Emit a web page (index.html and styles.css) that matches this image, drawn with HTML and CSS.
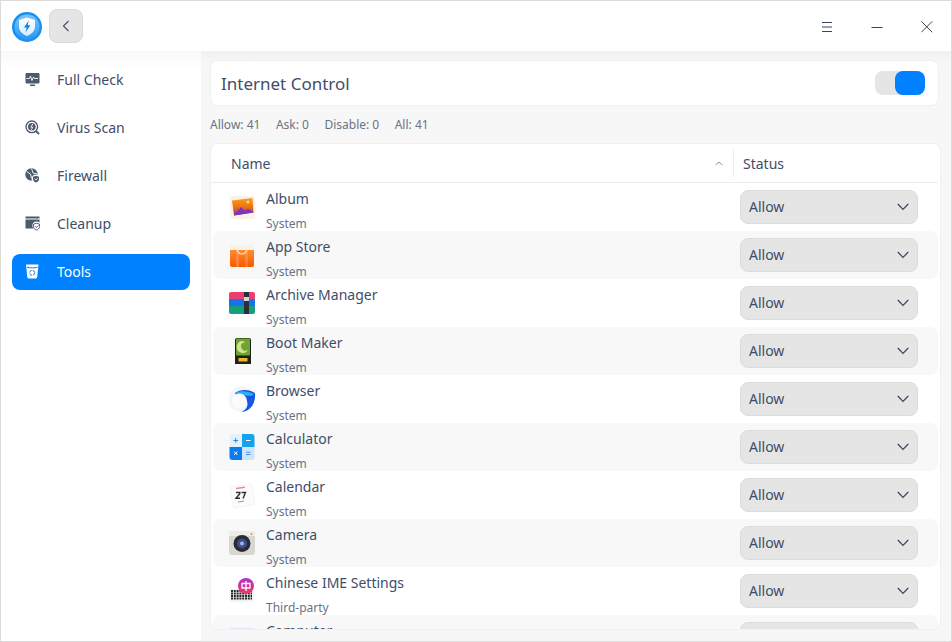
FILE: index.html
```html
<!DOCTYPE html>
<html lang="en">
<head>
    <meta charset="UTF-8">
    <title>Internet Control</title>
    <link rel="stylesheet" href="styles.css">
</head>
<body>
    <div class="window">
        <header class="titlebar">
            <svg class="logo" width="32" height="32" viewBox="0 0 32 32">
                <defs>
                    <linearGradient id="logoFill" x1="0" y1="0" x2="0" y2="1"><stop offset="0" stop-color="#7cc6fa"/><stop offset="1" stop-color="#2a97f2"/></linearGradient>
                    <linearGradient id="shieldFill" x1="0" y1="0" x2="0" y2="1"><stop offset="0" stop-color="#fff"/><stop offset="1" stop-color="#d5ecfd"/></linearGradient>
                </defs>
                <circle cx="16" cy="16" r="15" fill="#1a8ff2"/>
                <circle cx="16" cy="16" r="12.500" fill="url(#logoFill)"/>
                <path d="M16 6.500l8 2.500v6.500c0 4.500-3.200 7.500-8 9.500-4.800-2-8-5-8-9.500V9z" fill="url(#shieldFill)"/>
                <path d="M17.800 9.500l-4.800 7h2.700l-1.300 5 5-7.200h-2.800z" fill="#0f7fe8"/>
            </svg>
            <button class="back-btn">
                <svg width="10" height="12" viewBox="0 0 10 12"><path d="M7.500 1L2.500 6l5 5" fill="none" stroke="#4a5468" stroke-width="1.200"/></svg>
            </button>
            <div class="win-controls">
                <svg width="12" height="12" viewBox="0 0 12 12"><path d="M1 2.500h10M1 7h10M1 11.500h10" stroke="#3b4558" stroke-width="1"/></svg>
                <svg width="12" height="12" viewBox="0 0 12 12"><path d="M0.500 7.500h11" stroke="#3b4558" stroke-width="1"/></svg>
                <svg width="12" height="13" viewBox="0 0 12 13"><path d="M0.300 1.300l11 11M11.300 1.300l-11 11" stroke="#3b4558" stroke-width="1" fill="none"/></svg>
            </div>
        </header>

        <div class="content">
            <nav class="sidebar">
                <a class="nav-item">
                    <svg class="nav-icon" viewBox="0 0 15 15"><path d="M1.500 1h12a1 1 0 0 1 1 1v8.500a1 1 0 0 1-1 1h-12a1 1 0 0 1-1-1V2a1 1 0 0 1 1-1zM5 12.500h5V14H5z" fill="#4f5a70"/><path d="M1.500 6.500h3l1-2.500 1.500 4.500 1.500-3.500 1 1.500h3.500" fill="none" stroke="#fff" stroke-width=".9"/></svg>
                    Full Check
                </a>
                <a class="nav-item">
                    <svg class="nav-icon" viewBox="0 0 15 15"><circle cx="6.800" cy="6.800" r="5.800" fill="none" stroke="#4f5a70" stroke-width="1.400"/><circle cx="6.800" cy="6.800" r="3.800" fill="#4f5a70"/><path d="M7.800 4L5.800 7.200h2L6.300 9.800" fill="none" stroke="#fff" stroke-width=".9"/><path d="M11 11l3 3" stroke="#4f5a70" stroke-width="2"/></svg>
                    Virus Scan
                </a>
                <a class="nav-item">
                    <svg class="nav-icon" viewBox="0 0 15 15"><circle cx="6.500" cy="6.500" r="6.200" fill="#4f5a70"/><path d="M1.500 3.500L5.500 6l1 4M6.500 .5l1.500 4.500 4.500 1" fill="none" stroke="#fff" stroke-width=".9"/><circle cx="11" cy="11" r="4.500" fill="#fff"/><path d="M8 8.700l3-1 3 1V11c0 1.800-1.300 3-3 3.500-1.700-.5-3-1.700-3-3.500z" fill="#4f5a70"/><path d="M9.500 10.800l1.300 1.300 1.800-2" fill="none" stroke="#fff" stroke-width=".9"/></svg>
                    Firewall
                </a>
                <a class="nav-item">
                    <svg class="nav-icon" viewBox="0 0 15 15"><path d="M0.500 .5h14v2H.5zM.5 3.500h14v3.200a4 4 0 0 0-6 5.800H.5z" fill="#4f5a70"/><path d="M8.500 8.200l3-1 3 1v2.300c0 1.800-1.300 3-3 3.500-1.700-.5-3-1.700-3-3.500z" fill="none" stroke="#4f5a70"/><path d="M10 10.300l1.300 1.300 1.800-2" fill="none" stroke="#4f5a70"/></svg>
                    Cleanup
                </a>
                <a class="nav-item active">
                    <svg class="nav-icon" viewBox="0 0 15 15"><path d="M1 .5h12.500l-1.300 12.800a1.500 1.500 0 0 1-1.500 1.200H3.800a1.500 1.500 0 0 1-1.500-1.200z" fill="#fff"/><path d="M2 3.200c3 .8 8 .8 10.500 0" fill="none" stroke="#0081ff"/><circle cx="7.200" cy="8.800" r="2.500" fill="none" stroke="#0081ff" stroke-dasharray="3 1"/></svg>
                    Tools
                </a>
            </nav>

            <main class="main">
                <section class="control-card">
                    <span class="control-title">Internet Control</span>
                    <div class="switch"><span class="switch-knob"></span></div>
                </section>

                <div class="stats">
                    <span>Allow: 41</span>
                    <span>Ask: 0</span>
                    <span>Disable: 0</span>
                    <span>All: 41</span>
                </div>

                <section class="table">
                    <div class="table-head">
                        <div class="col-name">
                            Name
                            <svg width="8" height="5" viewBox="0 0 8 5"><path d="M0.500 4L4 1l3.500 3" fill="none" stroke="#8a919e"/></svg>
                        </div>
                        <div class="col-status">Status</div>
                    </div>
                    <div class="rows">
                        <div class="row">
                            <svg class="app-icon" viewBox="0 0 28 28">
                                <defs><linearGradient id="album" x1="0" y1="0" x2="0" y2="1"><stop offset="0" stop-color="#f9a11b"/><stop offset=".55" stop-color="#ec6d12"/><stop offset="1" stop-color="#6a2fc0"/></linearGradient></defs>
                                <rect x="2" y="2" width="25" height="23" rx="3" fill="#fbf1ea"/>
                                <path d="M4 6.500l20.500-2.500 1 14.500L6 21.500z" fill="url(#album)"/>
                                <path d="M6 21.500l7-8.500 4 4 3-2 5.500 3.500z" fill="#7a35b8"/>
                                <circle cx="20" cy="8" r="1.500" fill="#ffd98a"/>
                            </svg>
                            <div class="app-text"><div class="app-name">Album</div><div class="app-type">System</div></div>
                            <div class="select">Allow<svg width="12" height="8" viewBox="0 0 12 8"><path d="M0.800 1L6 6.500 11.200 1" fill="none" stroke="#3b4558" stroke-width="1.200"/></svg></div>
                        </div>
                        <div class="row">
                            <svg class="app-icon" viewBox="0 0 28 28">
                                <defs><linearGradient id="store" x1="0" y1="0" x2="0" y2="1"><stop offset="0" stop-color="#ff8f33"/><stop offset="1" stop-color="#f95800"/></linearGradient></defs>
                                <path d="M2 7h24v16a2 2 0 0 1-2 2H4a2 2 0 0 1-2-2z" fill="url(#store)"/>
                                <path d="M2 3h24v5H2z" fill="#fdf0e4"/>
                                <path d="M8 8h3v17H8zM17 8h3v17h-3z" fill="#ffa468" opacity=".45"/>
                                <path d="M9 7a5 5 0 0 0 10 0" fill="none" stroke="#ffe2c9" stroke-width="1.200"/>
                            </svg>
                            <div class="app-text"><div class="app-name">App Store</div><div class="app-type">System</div></div>
                            <div class="select">Allow<svg width="12" height="8" viewBox="0 0 12 8"><path d="M0.800 1L6 6.500 11.200 1" fill="none" stroke="#3b4558" stroke-width="1.200"/></svg></div>
                        </div>
                        <div class="row">
                            <svg class="app-icon" viewBox="0 0 28 28">
                                <rect x="1" y="2" width="26" height="8" rx="2" fill="#ea3f6f"/>
                                <rect x="1" y="9" width="26" height="8" fill="#1673ea"/>
                                <rect x="1" y="16" width="26" height="8" rx="2" fill="#16a07a"/>
                                <rect x="16" y="2" width="5" height="22" fill="#2c2f3a"/>
                                <rect x="16" y="7" width="5" height="4" fill="#d8d8d8"/>
                            </svg>
                            <div class="app-text"><div class="app-name">Archive Manager</div><div class="app-type">System</div></div>
                            <div class="select">Allow<svg width="12" height="8" viewBox="0 0 12 8"><path d="M0.800 1L6 6.500 11.200 1" fill="none" stroke="#3b4558" stroke-width="1.200"/></svg></div>
                        </div>
                        <div class="row">
                            <svg class="app-icon" viewBox="0 0 28 28">
                                <path d="M7 2a2 2 0 0 1 2-2h12a2 2 0 0 1 2 2v24H7z" fill="#1d2116"/>
                                <rect x="8" y="0.500" width="14" height="17" rx="1" fill="#6fa52c"/>
                                <path d="M15 3a6 6 0 1 0 5 9 4.500 4.500 0 0 1-7-3 3.500 3.500 0 0 1 5-4z" fill="#cfe29a"/>
                                <path d="M10.500 20h9v3.500h-9z" fill="#e8b92e"/>
                            </svg>
                            <div class="app-text"><div class="app-name">Boot Maker</div><div class="app-type">System</div></div>
                            <div class="select">Allow<svg width="12" height="8" viewBox="0 0 12 8"><path d="M0.800 1L6 6.500 11.200 1" fill="none" stroke="#3b4558" stroke-width="1.200"/></svg></div>
                        </div>
                        <div class="row">
                            <svg class="app-icon" viewBox="0 0 28 28">
                                <circle cx="13.500" cy="13" r="13" fill="#f3f5f8"/>
                                <path d="M7 7c5-4 14-4 20 0 1 9-4 19-14 19 8-2 9-13 1-15-2-.5-5 0-7-4z" fill="#1557e6"/>
                                <path d="M7 7c5-3 13-2 19 1-1 2-5 2-8 1.500-3-.5-8 0-11-2.500z" fill="#2ab0f6"/>
                                <circle cx="11.500" cy="15" r="7.500" fill="#fbfbfd"/>
                            </svg>
                            <div class="app-text"><div class="app-name">Browser</div><div class="app-type">System</div></div>
                            <div class="select">Allow<svg width="12" height="8" viewBox="0 0 12 8"><path d="M0.800 1L6 6.500 11.200 1" fill="none" stroke="#3b4558" stroke-width="1.200"/></svg></div>
                        </div>
                        <div class="row">
                            <svg class="app-icon" viewBox="0 0 28 28">
                                <defs><clipPath id="calcClip"><rect x="1.500" y="0" width="25" height="26" rx="3"/></clipPath></defs>
                                <g clip-path="url(#calcClip)">
                                    <rect x="1" y="0" width="13" height="13" fill="#e4f1fd"/>
                                    <rect x="14" y="0" width="13" height="13" fill="#17a2ee"/>
                                    <rect x="1" y="13" width="13" height="13" fill="#0b7bf2"/>
                                    <rect x="14" y="13" width="13" height="13" fill="#cfe4fb"/>
                                </g>
                                <path d="M5.500 6.500H10M7.700 4.200v4.500" stroke="#1a8df0"/>
                                <path d="M18 6.500h4.500M6 17.500l3.500 3.500M9.500 17.500L6 21" stroke="#fff"/>
                                <path d="M18 18.200h4.500M18 20.500h4.500" stroke="#3f94f0"/>
                            </svg>
                            <div class="app-text"><div class="app-name">Calculator</div><div class="app-type">System</div></div>
                            <div class="select">Allow<svg width="12" height="8" viewBox="0 0 12 8"><path d="M0.800 1L6 6.500 11.200 1" fill="none" stroke="#3b4558" stroke-width="1.200"/></svg></div>
                        </div>
                        <div class="row">
                            <svg class="app-icon" viewBox="0 0 28 28">
                                <path d="M3 5l19-3a2 2 0 0 1 2 2l3 18-20 4a2 2 0 0 1-2-1.500L2 7z" fill="#fbfbfb" stroke="#ececec" stroke-width=".6"/>
                                <path d="M8 6.500l9-1.300" stroke="#e88a90" stroke-width="1.500"/>
                                <path d="M10 20l6-1" stroke="#9a9a9a"/>
                                <path d="M8 10.500h3.800v1.200l-3.800 4.500h4M13.500 10.500h4l-2.500 6" fill="none" stroke="#2d2f36" stroke-width="1.400"/>
                            </svg>
                            <div class="app-text"><div class="app-name">Calendar</div><div class="app-type">System</div></div>
                            <div class="select">Allow<svg width="12" height="8" viewBox="0 0 12 8"><path d="M0.800 1L6 6.500 11.200 1" fill="none" stroke="#3b4558" stroke-width="1.200"/></svg></div>
                        </div>
                        <div class="row">
                            <svg class="app-icon" viewBox="0 0 28 28">
                                <rect x="1" y="1" width="26" height="24" rx="3" fill="#d9d7d2"/>
                                <path d="M1 6V4a3 3 0 0 1 3-3h20a3 3 0 0 1 3 3v2z" fill="#eeede9"/>
                                <circle cx="14" cy="13.500" r="8.500" fill="#2a2c35"/>
                                <circle cx="14" cy="13.500" r="5" fill="#3c4e8c"/>
                                <circle cx="14" cy="13.500" r="2" fill="#9fb2e8"/>
                                <circle cx="23.500" cy="4" r=".8" fill="#e64c3c"/>
                            </svg>
                            <div class="app-text"><div class="app-name">Camera</div><div class="app-type">System</div></div>
                            <div class="select">Allow<svg width="12" height="8" viewBox="0 0 12 8"><path d="M0.800 1L6 6.500 11.200 1" fill="none" stroke="#3b4558" stroke-width="1.200"/></svg></div>
                        </div>
                        <div class="row">
                            <svg class="app-icon" viewBox="0 0 28 28">
                                <rect x="1" y="11" width="25" height="13" rx="2" fill="#f4f3f5"/>
                                <path d="M3 13h21M3 15.500h21M3 18h21M3 20.500h21" stroke="#26262b" stroke-width="1.800" stroke-dasharray="2 .8"/>
                                <defs><linearGradient id="ime" x1="0" y1="0" x2="0" y2="1"><stop offset="0" stop-color="#b02fd6"/><stop offset="1" stop-color="#f5365c"/></linearGradient></defs>
                                <circle cx="18" cy="8" r="8" fill="url(#ime)"/>
                                <path d="M14 5.500h8V10h-8zM18 3v10" fill="none" stroke="#fff" stroke-width="1.300"/>
                            </svg>
                            <div class="app-text"><div class="app-name">Chinese IME Settings</div><div class="app-type">Third-party</div></div>
                            <div class="select">Allow<svg width="12" height="8" viewBox="0 0 12 8"><path d="M0.800 1L6 6.500 11.200 1" fill="none" stroke="#3b4558" stroke-width="1.200"/></svg></div>
                        </div>
                        <div class="row">
                            <svg class="app-icon" viewBox="0 0 28 28"><rect x="1" y="2" width="25" height="20" rx="2" fill="#dfe6fb"/></svg>
                            <div class="app-text"><div class="app-name">Computer</div><div class="app-type">System</div></div>
                            <div class="select">Allow<svg width="12" height="8" viewBox="0 0 12 8"><path d="M0.800 1L6 6.500 11.200 1" fill="none" stroke="#3b4558" stroke-width="1.200"/></svg></div>
                        </div>
                    </div>
                </section>
            </main>
        </div>
    </div>
</body>
</html>
```

FILE: styles.css
```css
* {
    box-sizing: border-box;
}

html, body {
    margin: 0;
    height: 100%;
    overflow: hidden;
}

body {
    font-family: "Noto Sans", sans-serif;
    font-size: 14px;
    color: #414d68;
}

.window {
    width: 952px;
    height: 642px;
    display: flex;
    flex-direction: column;
    border: 1px solid #dcdcdc;
    background: #f7f7f7;
}

.titlebar {
    height: 50px;
    flex: none;
    display: flex;
    align-items: center;
    padding-left: 10px;
    background: #fff;
}

.logo {
    margin-top: 2px;
    margin-right: 6px;
}

.back-btn {
    width: 34px;
    height: 34px;
    padding: 0;
    display: flex;
    align-items: center;
    justify-content: center;
    background: #e5e5e5;
    border: 1px solid #dadada;
    border-radius: 8px;
}

.win-controls {
    margin-left: auto;
    padding-right: 18px;
    display: flex;
    gap: 38px;
}

.content {
    flex: 1;
    display: flex;
    min-height: 0;
}

.sidebar {
    width: 200px;
    flex: none;
    padding: 11px 11px 0;
    background: linear-gradient(#f8f8f8, #fff 18px);
    display: flex;
    flex-direction: column;
    gap: 12px;
}

.nav-item {
    height: 36px;
    display: flex;
    align-items: center;
    padding: 0 0 2px 13px;
    gap: 17px;
    border-radius: 8px;
    color: #414d68;
}

.nav-item.active {
    background: #0081ff;
    color: #fff;
}

.nav-icon {
    width: 15px;
    height: 15px;
    flex: none;
}

.main {
    flex: 1;
    min-width: 0;
    padding: 9px 10px 11px 9px;
    display: flex;
    flex-direction: column;
    background: linear-gradient(#f0f0f0, #f7f7f7 12px);
}

.control-card {
    height: 46px;
    flex: none;
    display: flex;
    align-items: center;
    justify-content: space-between;
    padding: 0 13px 0 10px;
    margin-right: 2px;
    background: #fff;
    border: 1px solid #f0f0f0;
    border-radius: 8px;
}

.control-title {
    font-size: 17px;
}

.switch {
    width: 50px;
    height: 24px;
    display: flex;
    justify-content: flex-end;
    background: #e5e5e5;
    border-radius: 8px;
}

.switch-knob {
    width: 30px;
    height: 24px;
    background: #0081ff;
    border-radius: 8px;
}

.stats {
    height: 37px;
    flex: none;
    display: flex;
    align-items: center;
    gap: 15.5px;
    font-size: 12px;
    color: #6a7385;
}

.table {
    flex: 1;
    min-height: 0;
    display: flex;
    flex-direction: column;
    background: #fff;
    border: 1px solid #f0f0f0;
    border-radius: 8px;
    overflow: hidden;
}

.table-head {
    height: 39px;
    flex: none;
    display: flex;
    align-items: center;
    margin-right: 2px;
    border-bottom: 1px solid #ececec;
}

.col-name {
    width: 523px;
    height: 28px;
    display: flex;
    align-items: center;
    justify-content: space-between;
    padding: 0 10px 0 20px;
    border-right: 1px solid #ececec;
}

.col-status {
    padding-left: 9px;
}

.rows {
    flex: 1;
    min-height: 0;
    overflow: hidden;
    padding: 0 2px 0 2px;
}

.row {
    height: 48px;
    display: flex;
    align-items: center;
    padding-left: 15px;
    border-radius: 8px;
}

.row:nth-child(even) {
    background: #f8f8f8;
}

.app-icon {
    width: 28px;
    height: 28px;
    flex: none;
    margin-top: 2px;
    overflow: visible;
}

.app-text {
    flex: 1;
    margin-left: 10px;
    height: 48px;
    padding-top: 5px;
}

.app-name {
    height: 22px;
    line-height: 22px;
}

.app-type {
    height: 20px;
    line-height: 20px;
    margin-top: 4px;
    font-size: 12px;
    color: #6a7385;
}

.select {
    width: 178px;
    height: 34px;
    margin-right: 20px;
    display: flex;
    align-items: center;
    justify-content: space-between;
    padding: 0 8px 2px 8px;
    background: #e5e5e5;
    border: 1px solid #dcdcdc;
    border-radius: 8px;
}

.select svg {
    margin-top: 2px;
}
```
